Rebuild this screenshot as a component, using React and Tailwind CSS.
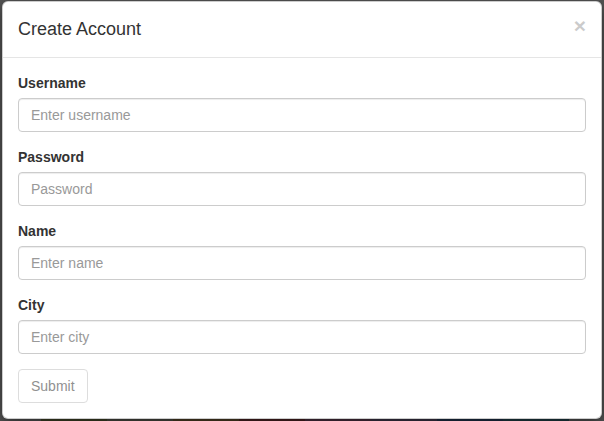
const fields = [
  { id: "username", label: "Username", placeholder: "Enter username", type: "text" },
  { id: "password", label: "Password", placeholder: "Password", type: "password" },
  { id: "name", label: "Name", placeholder: "Enter name", type: "text" },
  { id: "city", label: "City", placeholder: "Enter city", type: "text" },
];

const stripes = [
  "bg-[#3f4226]",
  "bg-[#4b4b42]",
  "bg-[#4f3f25]",
  "bg-[#4a2222]",
  "bg-[#4a3040]",
  "bg-[#3c3448]",
  "bg-[#1f3048]",
  "bg-[#1f3d44]",
];

const App = () => {
  return (
    <div
      className="w-[604px] h-[421px] overflow-hidden bg-[#545454] flex flex-col text-[#333]"
      style={{ fontFamily: '"Liberation Sans", Arial, sans-serif' }}
    >
      <div className="ml-[2px] mt-[1px] w-[600px] bg-white border border-black/20 rounded-[6px] shadow-[0_5px_15px_rgba(0,0,0,0.5)] relative z-10">
        <div className="flex items-start justify-between p-[15px] border-b border-[#e5e5e5]">
          <h4 className="text-[18px] leading-[25px] m-0">Create Account</h4>
          <button
            type="button"
            className="text-[21px] font-bold leading-none text-black opacity-20 -mt-[2px]"
          >
            ×
          </button>
        </div>
        <form className="p-[15px]" onSubmit={(e) => e.preventDefault()}>
          {fields.map((f) => (
            <div key={f.id} className="mb-[15px]">
              <label
                htmlFor={f.id}
                className="block text-[14px] leading-[20px] font-bold mb-[5px]"
              >
                {f.label}
              </label>
              <input
                id={f.id}
                type={f.type}
                placeholder={f.placeholder}
                className="block w-full h-[34px] px-[12px] py-[6px] text-[14px] leading-[20px] text-[#555] border border-[#ccc] rounded-[4px] shadow-[inset_0_1px_1px_rgba(0,0,0,0.075)] placeholder:text-[#999] outline-none"
              />
            </div>
          ))}
          <button
            type="submit"
            disabled
            className="h-[34px] px-[12px] py-[6px] text-[14px] leading-[20px] text-[#555] bg-white border border-[#ccc] rounded-[4px] opacity-[0.65] cursor-not-allowed"
          >
            Submit
          </button>
        </form>
      </div>
      <div className="flex mt-auto h-[3px] pl-[41px]">
        {stripes.map((c) => (
          <div key={c} className={`w-[66px] h-full ${c}`} />
        ))}
      </div>
    </div>
  );
};

export default App;
